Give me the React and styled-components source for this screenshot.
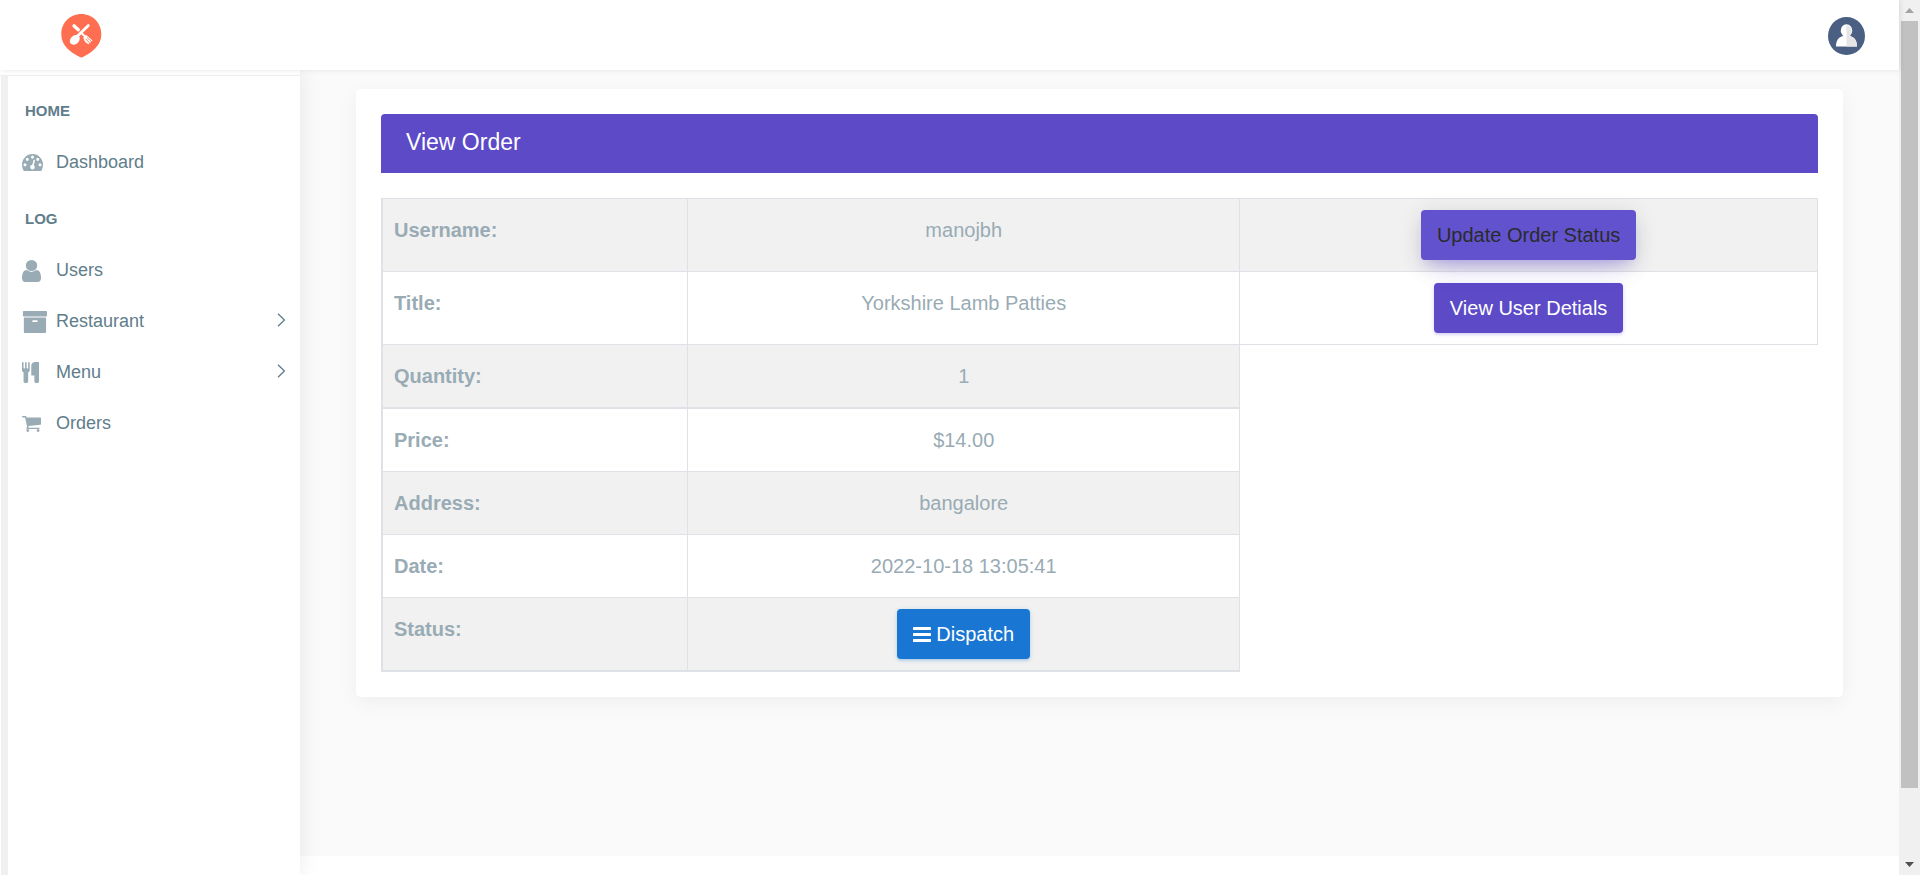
import React from "react";
import styled, { createGlobalStyle, css } from "styled-components";

const GlobalStyle = createGlobalStyle`
  *, *::before, *::after { box-sizing: border-box; }
  body {
    margin: 0;
    background: #fff;
    font-family: "Liberation Sans", Arial, sans-serif;
    color: #99abb4;
  }
`;

const Screen = styled.div`
  display: grid;
  grid-template-columns: minmax(0, 1fr) 21px;
  min-height: 100vh;
`;

const Page = styled.div`
  display: flex;
  flex-direction: column;
`;

const Header = styled.header`
  position: relative;
  z-index: 3;
  display: flex;
  align-items: center;
  justify-content: space-between;
  height: 70px;
  padding: 0 34px 0 61px;
  background: #fff;
  box-shadow: 1px 0 5px rgba(0, 0, 0, 0.1);
`;

const LogoLink = styled.a`
  display: flex;
  padding-top: 2px;
`;

const AvatarButton = styled.button`
  display: flex;
  padding: 2px 0 0;
  border: 0;
  background: none;
  cursor: pointer;
`;

const Body = styled.div`
  display: flex;
  flex: 1;
`;

const Sidebar = styled.aside`
  position: relative;
  z-index: 2;
  display: flex;
  flex-direction: column;
  flex: 0 0 300px;
  padding-top: 5px;
  background: #fff;
  box-shadow: 1px 0 20px rgba(0, 0, 0, 0.08);
`;

const Nav = styled.nav`
  display: flex;
  flex-direction: column;
  gap: 7px;
  flex: 1;
  padding-top: 10px;
  border-top: 1px solid #ececec;
  &::before {
    content: "";
    position: absolute;
    top: 5px;
    bottom: 0;
    left: 1px;
    width: 7px;
    background: #f0f0f0;
  }
`;

const NavHeading = styled.h2`
  margin: 0;
  padding-left: 25px;
  font-size: 15px;
  font-weight: 700;
  line-height: 50px;
  color: #607d8b;
`;

const NavList = styled.ul`
  margin: 0;
  padding: 0;
  list-style: none;
`;

const NavLink = styled.a`
  display: flex;
  align-items: center;
  height: 51px;
  padding: 0 14px 0 22px;
  font-size: 18px;
  line-height: 24px;
  color: #607d8b;
  text-decoration: none;
`;

const NavIcon = styled.span`
  display: flex;
  flex: 0 0 34px;
  padding-top: 2px;
  color: #99abb4;
`;

const NavLabel = styled.span`
  flex: 1;
`;

const Main = styled.main`
  display: flex;
  flex-direction: column;
  flex: 1;
  min-width: 0;
`;

const Content = styled.div`
  flex: 1;
  padding: 19px 56px 30px;
  background: #fafafa;
`;

const Footer = styled.footer`
  height: 19px;
  background: #fff;
`;

const Card = styled.section`
  padding: 25px;
  border-radius: 5px;
  background: #fff;
  box-shadow: 0 5px 20px rgba(0, 0, 0, 0.05);
`;

const CardTitle = styled.h1`
  margin: 0 0 25px;
  padding: 12px 25px 15px;
  border-radius: 4px 4px 0 0;
  background: #5c4ac7;
  color: #fff;
  font-size: 23px;
  font-weight: 400;
  line-height: 32px;
`;

const OrderTable = styled.table`
  width: 100%;
  table-layout: fixed;
  border-collapse: collapse;
  font-size: 20px;
  line-height: 40px;
`;

const Col = styled.col`
  width: ${(p) => p.$width};
`;

const Row = styled.tr`
  ${(p) =>
    p.$divider &&
    css`
      & > th,
      & > td {
        border-bottom-width: 2px;
      }
    `}
`;

const cell = css`
  padding: 11px;
  border: 1px solid #dee2e6;
  vertical-align: top;
  background: ${(p) => (p.$shaded ? "#f1f1f1" : "#fff")};
`;

const LabelCell = styled.th`
  ${cell}
  border-left-width: 2px;
  font-weight: 700;
  text-align: left;
`;

const ValueCell = styled.td`
  ${cell}
  text-align: center;
`;

const Button = styled.button`
  display: inline-flex;
  align-items: center;
  gap: ${(p) => (p.$kind === "info" ? "5px" : "0")};
  height: 50px;
  padding: 0 16px;
  border: 0;
  border-radius: 4px;
  vertical-align: top;
  font-family: inherit;
  font-size: 20px;
  line-height: 30px;
  cursor: pointer;
  ${(p) =>
    p.$kind === "info"
      ? css`
          background: #1976d2;
          color: #fff;
          box-shadow: 0 2px 2px rgba(25, 118, 210, 0.14), 0 1px 5px rgba(25, 118, 210, 0.2);
        `
      : css`
          background: #5c4ac7;
          color: #fff;
          box-shadow: 0 2px 2px rgba(116, 96, 238, 0.14), 0 1px 5px rgba(116, 96, 238, 0.2);
        `}
  ${(p) =>
    p.$raised &&
    css`
      position: relative;
      background: #6352ce;
      color: #292b2c;
      box-shadow: 0 14px 26px -12px rgba(116, 96, 238, 0.42), 0 4px 23px rgba(0, 0, 0, 0.12),
        0 8px 10px -5px rgba(116, 96, 238, 0.2);
    `}
`;

const ScrollRail = styled.div`
  position: sticky;
  top: 0;
  display: flex;
  flex-direction: column;
  align-items: center;
  height: 100vh;
  background: #f0f0f0;
`;

const ScrollArrow = styled.button`
  display: flex;
  align-items: center;
  justify-content: center;
  flex: 0 0 21px;
  width: 21px;
  padding: 0;
  border: 0;
  background: none;
  color: ${(p) => (p.$active ? "#505050" : "#a3a3a3")};
`;

const ScrollTrack = styled.div`
  flex: 1;
  width: 17px;
`;

const ScrollThumb = styled.div`
  height: 92.1%;
  background: #c1c1c1;
`;

const ICONS = {
  dashboard: {
    box: "0 256 1792 1408",
    width: 21,
    height: 17,
    path: "M384 1152q0-53-37.5-90.5t-90.5-37.5-90.5 37.5-37.5 90.5 37.5 90.5 90.5 37.5 90.5-37.5 37.5-90.5zm192-448q0-53-37.5-90.5t-90.5-37.5-90.5 37.5-37.5 90.5 37.5 90.5 90.5 37.5 90.5-37.5 37.5-90.5zm428 481l101-382q6-26-7.5-48.5t-38.5-29.5-48 6.5-30 39.5l-101 382q-60 5-107 43.5t-63 98.5q-20 77 20 146t117 89 146-20 89-117q16-60-6-117t-72-91zm660-33q0-53-37.5-90.5t-90.5-37.5-90.5 37.5-37.5 90.5 37.5 90.5 90.5 37.5 90.5-37.5 37.5-90.5zm-640-640q0-53-37.5-90.5t-90.5-37.5-90.5 37.5-37.5 90.5 37.5 90.5 90.5 37.5 90.5-37.5 37.5-90.5zm448 192q0-53-37.5-90.5t-90.5-37.5-90.5 37.5-37.5 90.5 37.5 90.5 90.5 37.5 90.5-37.5 37.5-90.5zm320 448q0 261-141 483-19 29-54 29h-1402q-35 0-54-29-141-221-141-483 0-182 71-348t191-286 286-191 348-71 348 71 286 191 191 286 71 348z",
  },
  user: {
    box: "256 128 1280 1536",
    width: 19,
    height: 22,
    path: "M1536 1399q0 109-62.5 187t-150.5 78h-854q-88 0-150.5-78t-62.5-187q0-85 8.5-160.5t31.5-152 58.5-131 94-89 134.5-34.5q131 128 313 128t313-128q76 0 134.5 34.5t94 89 58.5 131 31.5 152 8.5 160.5zm-256-887q0 159-112.5 271.5t-271.5 112.5-271.5-112.5-112.5-271.5 112.5-271.5 271.5-112.5 271.5 112.5 112.5 271.5z",
  },
  archive: {
    box: "0 128 1728 1536",
    width: 25,
    height: 22,
    path: "M1088 832q0-26-19-45t-45-19h-256q-26 0-45 19t-19 45 19 45 45 19h256q26 0 45-19t19-45zm576-192v960q0 26-19 45t-45 19h-1408q-26 0-45-19t-19-45v-960q0-26 19-45t45-19h1408q26 0 45 19t19 45zm64-448v256q0 26-19 45t-45 19h-1536q-26 0-45-19t-19-45v-256q0-26 19-45t45-19h1536q26 0 45 19t19 45z",
  },
  cutlery: {
    box: "192 0 1408 1792",
    width: 17,
    height: 21,
    path: "M832 64v640q0 61-35.5 111t-92.5 70v779q0 52-38 90t-90 38h-128q-52 0-90-38t-38-90v-779q-57-20-92.5-70t-35.5-111v-640q0-26 19-45t45-19 45 19 19 45v416q0 26 19 45t45 19 45-19 19-45v-416q0-26 19-45t45-19 45 19 19 45v416q0 26 19 45t45 19 45-19 19-45v-416q0-26 19-45t45-19 45 19 19 45zm768 0v1600q0 52-38 90t-90 38h-128q-52 0-90-38t-38-90v-512h-224q-13 0-22.5-9.5t-9.5-22.5v-800q0-132 94-226t226-94h256q26 0 45 19t19 45z",
  },
  cart: {
    box: "64 256 1664 1408",
    width: 19,
    height: 16,
    path: "M704 1536q0 52-38 90t-90 38-90-38-38-90 38-90 90-38 90 38 38 90zm896 0q0 52-38 90t-90 38-90-38-38-90 38-90 90-38 90 38 38 90zm128-1088v512q0 24-16.5 42.5t-40.5 21.5l-1044 122q13 60 13 70 0 16-24 64h920q26 0 45 19t19 45-19 45-45 19h-1024q-26 0-45-19t-19-45q0-11 8-31.5t16-36 21.5-40 15.5-29.5l-177-823h-204q-26 0-45-19t-19-45 19-45 45-19h256q16 0 28.5 6.5t19.5 15.5 13 24.5 8 26 5.5 29.5 4.5 26h1201q26 0 45 19t19 45z",
  },
  bars: {
    box: "128 256 1536 1280",
    width: 18,
    height: 15,
    path: "M1664 1344v128q0 26-19 45t-45 19h-1408q-26 0-45-19t-19-45v-128q0-26 19-45t45-19h1408q26 0 45 19t19 45zm0-512v128q0 26-19 45t-45 19h-1408q-26 0-45-19t-19-45v-128q0-26 19-45t45-19h1408q26 0 45 19t19 45zm0-512v128q0 26-19 45t-45 19h-1408q-26 0-45-19t-19-45v-128q0-26 19-45t45-19h1408q26 0 45 19t19 45z",
  },
};

function Icon({ name }) {
  const { box, width, height, path } = ICONS[name];
  return (
    <svg width={width} height={height} viewBox={box} preserveAspectRatio="none" fill="currentColor" aria-hidden="true">
      <path d={path} />
    </svg>
  );
}

function Chevron() {
  return (
    <svg width="9" height="15" viewBox="0 0 9 15" fill="none" stroke="#607d8b" strokeWidth="1.3" aria-hidden="true">
      <path d="M1 0.8 7.4 7 1 13.2" />
    </svg>
  );
}

function Logo() {
  return (
    <svg width="41" height="44" viewBox="0 0 41 44" aria-hidden="true">
      <path
        d="M20.300 0C31.500 0 40.300 8.800 40.300 20C40.300 27 37 32 32.500 36C28.500 39.600 24.500 41.400 22.300 42.800Q20.300 44 18.300 42.800C16.100 41.400 12 39.600 8 36C3.500 32 0.300 27 0.300 20C0.300 8.800 9.100 0 20.300 0Z"
        fill="#ff6e50"
      />
      <g stroke="#fff" fill="none" strokeLinecap="round">
        <path d="M13 11.800 17.300 15.800" strokeWidth="3.300" />
        <path d="M27.400 11.600 15.500 23" strokeWidth="2.800" />
        <path d="M20.500 19.200 24.500 22.800" strokeWidth="2" />
      </g>
      <ellipse cx="13.800" cy="25.800" rx="5.600" ry="4.200" transform="rotate(-42 13.800 25.800)" fill="#fff" />
      <path d="M22.500 24.500Q22 21.500 25.500 21.300L31.500 26.500 27.600 30.200Q23.500 28.500 22.500 24.500Z" fill="#fff" />
      <g stroke="#ff6e50" strokeWidth="0.900" strokeLinecap="round">
        <path d="M26.300 23.800 31 28" />
        <path d="M25 25.200 29.300 29.800" />
      </g>
    </svg>
  );
}

function Avatar() {
  return (
    <svg width="37" height="38" viewBox="0 0 37 38" aria-hidden="true">
      <ellipse cx="18.500" cy="19" rx="18.500" ry="19" fill="#4b5f83" />
      <path d="M8 29.500C8 24 10 20.500 14.800 19L14.800 18.300A5.800 6.200 0 1 1 22.200 18.300L22.200 19C27 20.500 29 24 29 29.500Z" fill="#fff" />
      <path d="M18.500 8.300A5.600 6 0 0 1 22.200 18.300L22.200 19C27 20.500 29 24 29 29.500H18.500Z" fill="#e6e6e6" />
    </svg>
  );
}

const NAV_GROUPS = [
  { heading: "HOME", items: [{ icon: "dashboard", label: "Dashboard" }] },
  {
    heading: "LOG",
    items: [
      { icon: "user", label: "Users" },
      { icon: "archive", label: "Restaurant", expandable: true },
      { icon: "cutlery", label: "Menu", expandable: true },
      { icon: "cart", label: "Orders" },
    ],
  },
];

const ORDER_ROWS = [
  { label: "Username:", value: "manojbh", action: <Button type="button" $raised>Update Order Status</Button> },
  { label: "Title:", value: "Yorkshire Lamb Patties", action: <Button type="button">View User Detials</Button> },
  { label: "Quantity:", value: "1", divider: true },
  { label: "Price:", value: "$14.00" },
  { label: "Address:", value: "bangalore" },
  { label: "Date:", value: "2022-10-18 13:05:41" },
  {
    label: "Status:",
    value: (
      <Button type="button" $kind="info">
        <Icon name="bars" />
        Dispatch
      </Button>
    ),
    divider: true,
  },
];

export default function App() {
  return (
    <>
      <GlobalStyle />
      <Screen>
        <Page>
          <Header>
            <LogoLink href="#home" aria-label="Home">
              <Logo />
            </LogoLink>
            <AvatarButton type="button" aria-label="Account">
              <Avatar />
            </AvatarButton>
          </Header>
          <Body>
            <Sidebar>
              <Nav aria-label="Main">
                {NAV_GROUPS.map((group) => (
                  <div key={group.heading}>
                    <NavHeading>{group.heading}</NavHeading>
                    <NavList>
                      {group.items.map((item) => (
                        <li key={item.label}>
                          <NavLink href={`#${item.label.toLowerCase()}`}>
                            <NavIcon>
                              <Icon name={item.icon} />
                            </NavIcon>
                            <NavLabel>{item.label}</NavLabel>
                            {item.expandable && <Chevron />}
                          </NavLink>
                        </li>
                      ))}
                    </NavList>
                  </div>
                ))}
              </Nav>
            </Sidebar>
            <Main>
              <Content>
                <Card>
                  <CardTitle>View Order</CardTitle>
                  <OrderTable>
                    <colgroup>
                      <Col $width="21.3%" />
                      <Col $width="38.45%" />
                      <Col $width="40.25%" />
                    </colgroup>
                    <tbody>
                      {ORDER_ROWS.map((row, i) => {
                        const shaded = i % 2 === 0;
                        return (
                          <Row key={row.label} $divider={row.divider}>
                            <LabelCell scope="row" $shaded={shaded}>
                              {row.label}
                            </LabelCell>
                            <ValueCell $shaded={shaded}>{row.value}</ValueCell>
                            {row.action && <ValueCell $shaded={shaded}>{row.action}</ValueCell>}
                          </Row>
                        );
                      })}
                    </tbody>
                  </OrderTable>
                </Card>
              </Content>
              <Footer />
            </Main>
          </Body>
        </Page>
        <ScrollRail>
          <ScrollArrow type="button" aria-label="Scroll up">
            <svg width="9" height="5" viewBox="0 0 9 5" fill="currentColor">
              <path d="M4.500 0 9 5H0Z" />
            </svg>
          </ScrollArrow>
          <ScrollTrack>
            <ScrollThumb />
          </ScrollTrack>
          <ScrollArrow type="button" aria-label="Scroll down" $active>
            <svg width="9" height="5" viewBox="0 0 9 5" fill="currentColor">
              <path d="M0 0H9L4.500 5Z" />
            </svg>
          </ScrollArrow>
        </ScrollRail>
      </Screen>
    </>
  );
}
